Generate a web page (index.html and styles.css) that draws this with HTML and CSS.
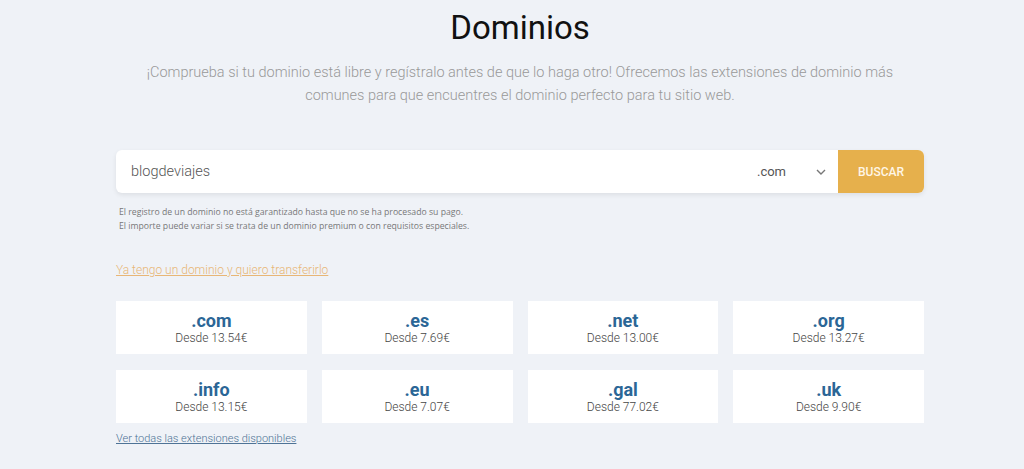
FILE: index.html
```html
<!DOCTYPE html>
<html lang="es">
<head>
    <meta charset="UTF-8">
    <meta name="viewport" content="width=device-width, initial-scale=1.0">
    <title>Dominios</title>
    <link rel="stylesheet" href="styles.css">
</head>
<body>

<div class="wrap">
    <h1 class="title">Dominios</h1>
    <p class="intro">¡Comprueba si tu dominio está libre y regístralo antes de que lo haga otro! Ofrecemos las extensiones de dominio más comunes para que encuentres el dominio perfecto para tu sitio web.</p>

    <form class="search" onsubmit="return false">
        <input class="search-input" type="text" value="blogdeviajes">
        <div class="search-ext">
            <span>.com</span>
            <svg width="10" height="6" viewBox="0 0 10 6"><path d="M1 1l4 4 4-4" fill="none" stroke="#777" stroke-width="1.4"/></svg>
        </div>
        <button class="search-btn">BUSCAR</button>
    </form>

    <div class="notes">
        <p>El registro de un dominio no está garantizado hasta que no se ha procesado su pago.</p>
        <p>El importe puede variar si se trata de un dominio premium o con requisitos especiales.</p>
    </div>

    <a class="transfer" href="#">Ya tengo un dominio y quiero transferirlo</a>

    <div class="grid">
        <div class="card"><div class="ext">.com</div><div class="price">Desde 13.54€</div></div>
        <div class="card"><div class="ext">.es</div><div class="price">Desde 7.69€</div></div>
        <div class="card"><div class="ext">.net</div><div class="price">Desde 13.00€</div></div>
        <div class="card"><div class="ext">.org</div><div class="price">Desde 13.27€</div></div>
        <div class="card"><div class="ext">.info</div><div class="price">Desde 13.15€</div></div>
        <div class="card"><div class="ext">.eu</div><div class="price">Desde 7.07€</div></div>
        <div class="card"><div class="ext">.gal</div><div class="price">Desde 77.02€</div></div>
        <div class="card"><div class="ext">.uk</div><div class="price">Desde 9.90€</div></div>
    </div>

    <a class="all" href="#">Ver todas las extensiones disponibles</a>
</div>

</body>
</html>
```

FILE: styles.css
```css
body {
    margin: 0;
    padding-left: 16px;
    background-color: #eff2f7;
    font-family: Roboto, "Liberation Sans", sans-serif;
}

.wrap {
    width: 808px;
    margin: 0 auto;
    padding-top: 8px;
}

.title {
    margin: 0;
    font-size: 33px;
    line-height: 40px;
    font-weight: 400;
    color: #111;
    text-align: center;
}

.intro {
    margin: 13px 0 0;
    font-size: 14.5px;
    line-height: 23px;
    font-weight: 300;
    color: #999;
    text-align: center;
}

.search {
    display: flex;
    height: 43px;
    margin-top: 43px;
    border-radius: 6px;
    background-color: white;
    box-shadow: 0 2px 5px rgba(0, 0, 0, 0.08);
}

.search-input {
    flex: 1;
    border: none;
    outline: none;
    background: transparent;
    padding: 0 15px;
    font-family: Roboto, "Liberation Sans", sans-serif;
    font-size: 14.5px;
    font-weight: 300;
    color: #555;
    border-radius: 6px 0 0 6px;
}

.search-ext {
    display: flex;
    align-items: center;
    gap: 30px;
    padding-right: 12px;
    font-size: 13px;
    color: #555;
}

.search-btn {
    width: 86px;
    border: none;
    border-radius: 0 6px 6px 0;
    background-color: #e6b04c;
    color: #fff6e6;
    font-family: Roboto, "Liberation Sans", sans-serif;
    font-size: 12px;
    font-weight: 500;
    cursor: pointer;
}

.notes {
    margin-top: 12px;
    padding-left: 3px;
    font-family: "Open Sans", sans-serif;
    font-size: 8.7px;
    line-height: 14px;
    color: #777;
}

.notes p {
    margin: 0;
}

.transfer {
    display: block;
    margin-top: 29px;
    font-size: 12px;
    line-height: 16px;
    font-weight: 300;
    color: #e8b676;
}

.grid {
    display: grid;
    grid-template-columns: repeat(4, 1fr);
    gap: 16px 15px;
    margin-top: 23px;
}

.card {
    height: 53px;
    padding-top: 1px;
    box-sizing: border-box;
    background-color: white;
    display: flex;
    flex-direction: column;
    justify-content: center;
    align-items: center;
}

.ext {
    font-size: 18px;
    line-height: 20px;
    font-weight: 700;
    color: #2b6696;
}

.price {
    font-size: 12px;
    line-height: 15px;
    font-weight: 300;
    color: #444;
}

.all {
    display: block;
    margin-top: 8px;
    font-size: 11px;
    line-height: 16px;
    font-weight: 300;
    color: #4e7396;
}
```
